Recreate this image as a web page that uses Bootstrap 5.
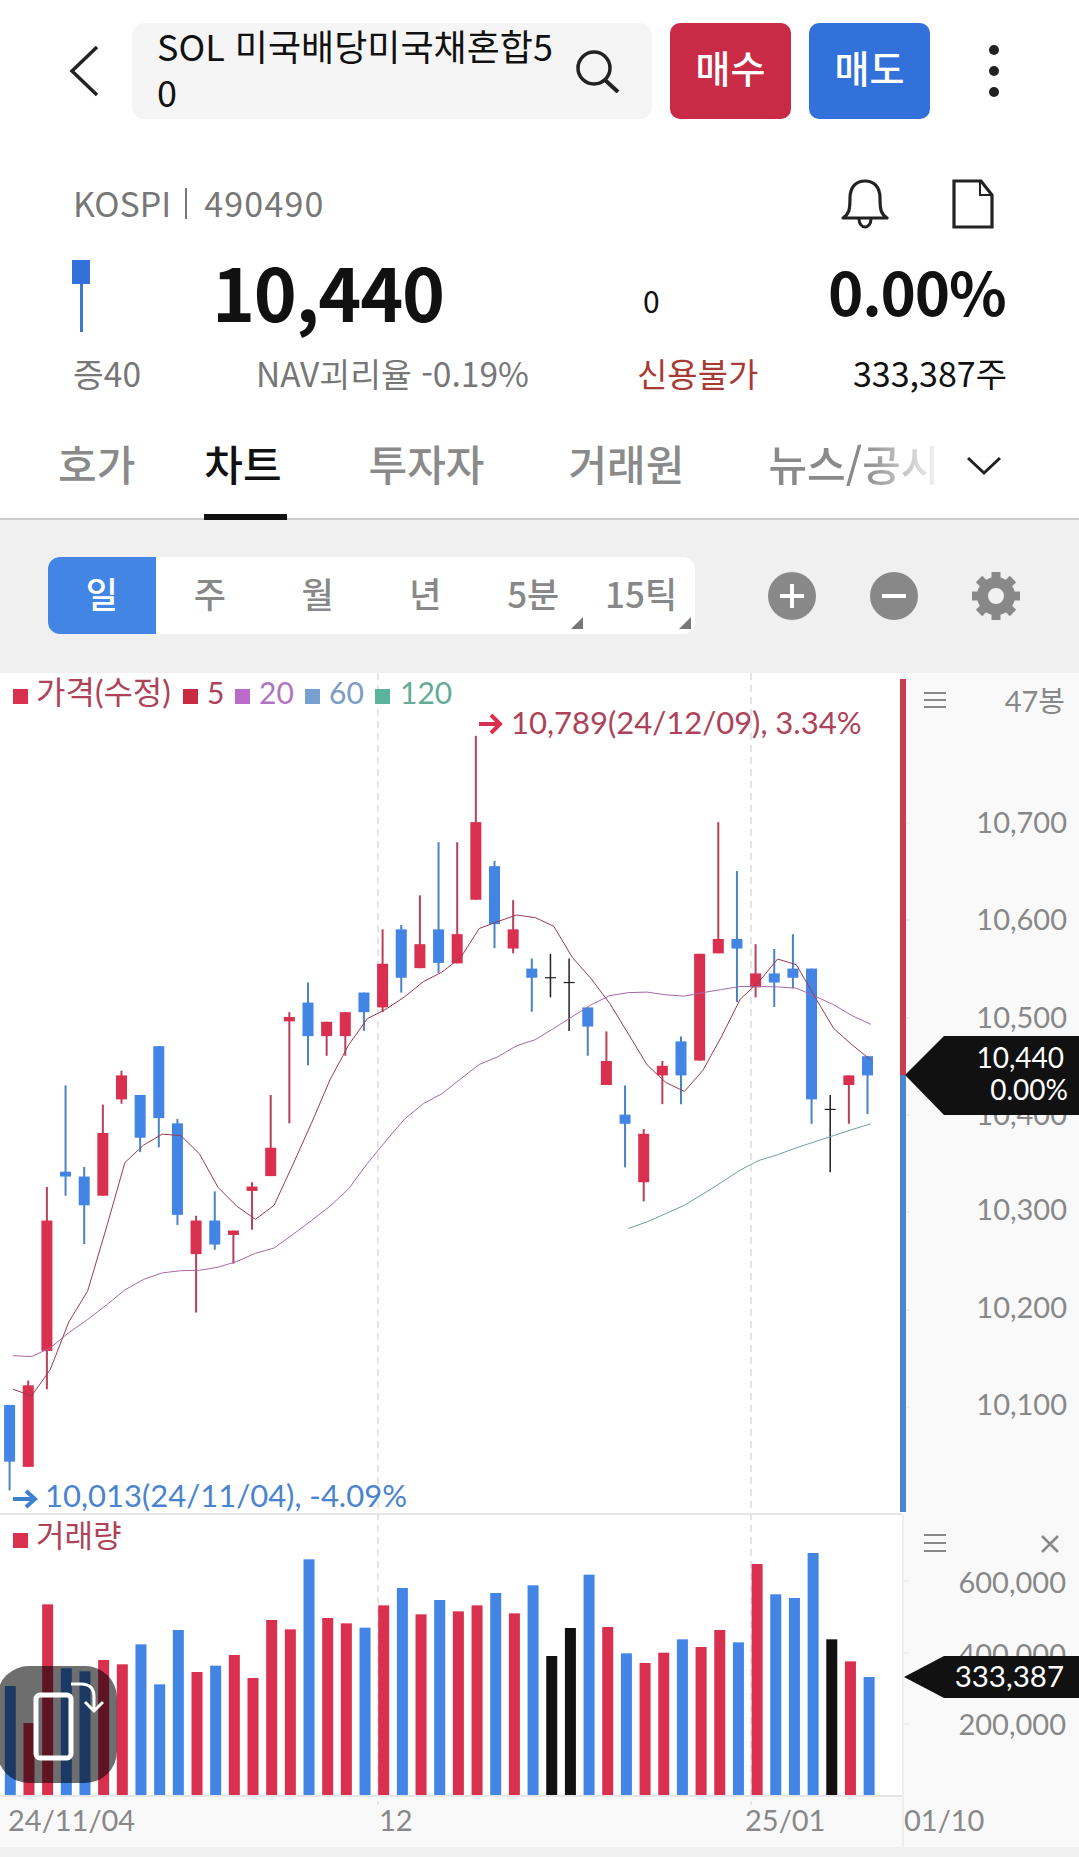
<!DOCTYPE html>
<html lang="ko">
<head>
  <meta charset="UTF-8">
  <meta name="viewport" content="width=device-width, initial-scale=1.0">
  <title>SOL 미국배당미국채혼합50 차트</title>
  <link rel="stylesheet" href="https://cdn.jsdelivr.net/npm/bootstrap@5.3.3/dist/css/bootstrap.min.css">
  <script src="https://cdn.jsdelivr.net/npm/bootstrap@5.3.3/dist/js/bootstrap.bundle.min.js"></script>
  <style>
    html, body { height: 1857px; overflow: hidden; }
    body { width: 1079px; background: #f0f0f0; font-family: "Noto Sans CJK KR", "Noto Sans", sans-serif; color: #111; }
    .top-zone { background: #fff; height: 520px; }

    .head-bar { padding-top: 23px; box-sizing: content-box; height: 96px; }
    .back-slot { width: 132px; padding-left: 69px; }
    .search-box { width: 520px; height: 96px; background: #f5f5f5; border-radius: 12px; padding-left: 25px; }
    .search-name { width: 410px; margin-top: -6px; font-size: 36px; line-height: 46px; word-break: break-all; color: #111; }
    .trade-btn { width: 121px; height: 96px; margin-left: 18px; border: 0; border-radius: 10px; color: #fff; font-size: 38px; font-weight: 500; padding: 0 0 9px; }
    .trade-btn:hover { color: #fff; }
    .trade-buy, .trade-buy:hover { background: #c92a45; }
    .trade-sell, .trade-sell:hover { background: #3371da; }
    .kebab-slot { width: 60px; margin-left: 19px; padding-left: 40px; }
    .kebab-dot { width: 10px; height: 10px; border-radius: 50%; background: #222; margin: 5.5px 0; }

    .code-row { height: 60px; margin-top: 55px; padding-left: 73px; font-size: 34px; color: #777; }
    .code-row > span { margin-top: -4px; }
    .code-row > .code-sep { width: 2px; height: 31px; background: #777; margin: -2px 17px 0 14px; }
    .code-num { letter-spacing: 1.2px; }
    .code-icons { margin-left: auto; padding-right: 85px; gap: 63px; }
    .quote-row { height: 112px; }
    .quote-mark { width: 212px; padding: 26px 0 0 72px; }
    .mini-body { width: 18px; height: 24px; background: #3371da; }
    .mini-wick { width: 3px; height: 48px; background: #3e78c8; margin-left: 8px; }
    .quote-price { width: 431px; font-size: 73px; font-weight: 700; letter-spacing: -1.2px; line-height: 112px; }
    .quote-diff { width: 185px; font-size: 30px; line-height: 112px; padding-top: 10px; }
    .quote-rate { font-size: 60px; font-weight: 700; letter-spacing: -1.2px; line-height: 112px; }
    .sub-row { height: 58px; font-size: 33.5px; line-height: 58px; margin-top: -2px; }
    .sub-a { width: 256px; padding-left: 73px; color: #777; }
    .sub-b { width: 381px; color: #777; }
    .sub-c { width: 216px; color: #a83a35; font-size: 33px; }
    .sub-d { color: #111; font-size: 34px; }

    .tab-bar { height: 110px; margin-top: 8px; border-bottom: 2px solid #ccc; position: relative; padding-left: 58px; }
    .tab-item { position: relative; height: 108px; padding-top: 23px; margin-right: 84px; font-size: 42px; line-height: 60px; color: #8a8a8a; font-weight: 500; white-space: nowrap; }
    .tab-item.on { color: #111; margin-right: 87px; }
    .tab-item.on::after { content: ""; position: absolute; left: 0; right: -5px; bottom: -2px; height: 6px; background: #111; }
    .tab-first { margin-right: 69px; }
    .tab-fade { margin-right: 0; width: 172px; overflow: hidden; -webkit-mask-image: linear-gradient(90deg, #000 55%, rgba(0,0,0,.1) 98%); mask-image: linear-gradient(90deg, #000 55%, rgba(0,0,0,.1) 98%); }
    .tab-more { position: absolute; left: 966px; top: 46px; }

    .tool-bar { height: 153px; padding: 37px 0 0 48px; }
    .period-box { width: 647px; height: 77px; background: #fff; border-radius: 12px; overflow: hidden; }
    .period-item { width: 108px; height: 77px; text-align: center; font-size: 35px; line-height: 70px; color: #888; font-weight: 500; position: relative; padding: 0 0 6px; border: 0; background: none; }
    .period-item.on { background: #4285e5; color: #fff; }
    .period-item.more::after { content: ""; position: absolute; right: 4px; bottom: 5px; border-style: solid; border-width: 0 0 12px 12px; border-color: transparent transparent #777 transparent; }
    .tool-icons { height: 77px; margin-left: 73px; gap: 54px; }

    .chart-zone { height: 1174px; }
    .chart-zone svg { display: block; }
    .chart-zone text { font-family: Lato, "Noto Sans CJK KR", sans-serif; font-size: 29px; fill: #888; }
    .chart-zone text.tag { fill: #fff; font-size: 28px; }
    .chart-zone text.tag-wide { font-size: 29.5px; }
    .chart-zone text.legend-main { font-size: 32px; fill: #ad4259; }
    .chart-zone text.legend-num { font-size: 30px; }
    .chart-zone text.reddish { font-size: 31px; fill: #ad4259; }
    .chart-zone text.blueish { font-size: 31px; fill: #4a84cf; }
  </style>
</head>
<body>

  <div class="top-zone">
    <!-- search / order buttons -->
    <header class="head-bar d-flex">
      <div class="back-slot d-flex align-items-center">
        <svg width="30" height="52" viewBox="0 0 30 52"><path d="M28 2 3 26l25 24" fill="none" stroke="#222" stroke-width="3.5"/></svg>
      </div>
      <div class="search-box d-flex align-items-center">
        <div class="search-name">SOL 미국배당미국채혼합50</div>
        <svg class="ms-2" width="46" height="44" viewBox="0 0 46 44"><circle cx="19" cy="19" r="16" fill="none" stroke="#222" stroke-width="3.5"/><path d="m30 31 13 12" stroke="#222" stroke-width="4"/></svg>
      </div>
      <button type="button" class="btn trade-btn trade-buy">매수</button>
      <button type="button" class="btn trade-btn trade-sell">매도</button>
      <div class="kebab-slot d-flex flex-column justify-content-center">
        <div class="kebab-dot"></div><div class="kebab-dot"></div><div class="kebab-dot"></div>
      </div>
    </header>

    <!-- quote -->
    <div class="code-row d-flex align-items-center">
      <span>KOSPI</span><span class="code-sep"></span><span class="code-num">490490</span>
      <div class="code-icons d-flex">
        <svg width="48" height="50" viewBox="0 0 48 50"><path d="M2 39c6-4 7-8 7-20C9 8 15 2 24 2s15 6 15 17c0 12 1 16 7 20z" fill="none" stroke="#222" stroke-width="3.2" stroke-linejoin="round"/><path d="M18 40c0 5 3 8 6 8s6-3 6-8" fill="none" stroke="#222" stroke-width="3"/></svg>
        <svg width="42" height="50" viewBox="0 0 42 50"><path d="M2 2h27l11 14v32H2z" fill="none" stroke="#222" stroke-width="3.2"/><path d="M28 2v14h12" fill="none" stroke="#222" stroke-width="2"/></svg>
      </div>
    </div>
    <div class="quote-row d-flex">
      <div class="quote-mark"><div class="mini-body"></div><div class="mini-wick"></div></div>
      <div class="quote-price">10,440</div>
      <div class="quote-diff">0</div>
      <div class="quote-rate">0.00%</div>
    </div>
    <div class="sub-row d-flex">
      <div class="sub-a">증40</div>
      <div class="sub-b">NAV괴리율 -0.19%</div>
      <div class="sub-c">신용불가</div>
      <div class="sub-d">333,387주</div>
    </div>

    <!-- tabs -->
    <nav class="tab-bar d-flex">
      <div class="tab-item tab-first">호가</div>
      <div class="tab-item on">차트</div>
      <div class="tab-item">투자자</div>
      <div class="tab-item">거래원</div>
      <div class="tab-item tab-fade">뉴스/공시</div>
      <svg class="tab-more" width="36" height="20" viewBox="0 0 36 20"><path d="m2 2 16 15L34 2" fill="none" stroke="#222" stroke-width="3"/></svg>
    </nav>
  </div>

  <!-- period selector -->
  <div class="tool-bar d-flex">
    <div class="period-box d-flex">
      <button type="button" class="period-item on">일</button>
      <button type="button" class="period-item">주</button>
      <button type="button" class="period-item">월</button>
      <button type="button" class="period-item">년</button>
      <button type="button" class="period-item more">5분</button>
      <button type="button" class="period-item more">15틱</button>
    </div>
    <div class="tool-icons d-flex align-items-center">
      <svg width="48" height="48" viewBox="0 0 48 48"><circle cx="24" cy="24" r="24" fill="#888"/><path d="M24 12v24M12 24h24" stroke="#fff" stroke-width="4"/></svg>
      <svg width="48" height="48" viewBox="0 0 48 48"><circle cx="24" cy="24" r="24" fill="#888"/><path d="M12 24h24" stroke="#fff" stroke-width="4"/></svg>
      <svg width="48" height="48" viewBox="0 0 48 48" id="gearIcon"><circle cx="24" cy="24" r="13.5" fill="none" stroke="#888" stroke-width="11"/></svg>
    </div>
  </div>

  <!-- chart -->
  <div class="chart-zone">
    <svg id="chart" width="1079" height="1174" viewBox="0 673 1079 1174" xmlns="http://www.w3.org/2000/svg">
      <rect x="0" y="673" width="1079" height="1174" fill="#fff"/>
      <rect x="903" y="673" width="176" height="1174" fill="#f9f9f9"/>
      <rect x="0" y="1797" width="1079" height="50" fill="#f9f9f9"/>
      <rect x="0" y="1513" width="903" height="2" fill="#e6e6e6"/>
      <rect x="0" y="1795" width="903" height="2" fill="#e6e6e6"/>
      <rect x="902" y="1515" width="2" height="332" fill="#eee"/>
      <path d="M378 673V1805M751 673V1805" stroke="#e4e4e4" stroke-width="2" stroke-dasharray="7 5"/>

      <g id="candles"></g>
      <g id="volumes"></g>

      <rect x="900" y="679" width="6" height="396" fill="#cb3c54"/>
      <rect x="900" y="1075" width="6" height="437" fill="#4a86d0"/>

      <!-- legend -->
      <rect x="13" y="689" width="15" height="15" fill="#d9304f"/>
      <text class="legend-main" x="36" y="704">가격(수정)</text>
      <rect x="183" y="689" width="15" height="15" fill="#c92a42"/>
      <text class="legend-num" x="207" y="704" style="fill:#ad4259">5</text>
      <rect x="235" y="689" width="15" height="15" fill="#bb6bc9"/>
      <text class="legend-num" x="259" y="704" style="fill:#b073c0">20</text>
      <rect x="305" y="689" width="15" height="15" fill="#779fcf"/>
      <text class="legend-num" x="329" y="704" style="fill:#7a9cc6">60</text>
      <rect x="375" y="689" width="15" height="15" fill="#5cb39c"/>
      <text class="legend-num" x="400" y="704" style="fill:#66ab98">120</text>

      <path d="M479 724h20m-8-9 9 9-9 9" fill="none" stroke="#d9304f" stroke-width="4"/>
      <text class="reddish" x="511" y="734">10,789(24/12/09), 3.34%</text>
      <path d="M13 1499h21m-8-8 9 8-9 8" fill="none" stroke="#3f7fd0" stroke-width="4"/>
      <text class="blueish" x="45" y="1507">10,013(24/11/04), -4.09%</text>

      <rect x="13" y="1533" width="15" height="15" fill="#d9304f"/>
      <text class="reddish" x="36" y="1547">거래량</text>

      <!-- price axis -->
      <path d="M924 693h22M924 700h22M924 707h22M924 1535h22M924 1543h22M924 1551h22" stroke="#888" stroke-width="2"/>
      <text x="1065" y="712" text-anchor="end">47봉</text>
      <text x="1067" y="833" text-anchor="end">10,700</text>
      <text x="1067" y="930" text-anchor="end">10,600</text>
      <text x="1067" y="1028" text-anchor="end">10,500</text>
      <text x="1067" y="1125" text-anchor="end">10,400</text>
      <text x="1067" y="1220" text-anchor="end">10,300</text>
      <text x="1067" y="1318" text-anchor="end">10,200</text>
      <text x="1067" y="1415" text-anchor="end">10,100</text>
      <path d="M906 823h4M906 920h4M906 1018h4M906 1115h4M906 1212h4M906 1310h4M906 1407h4M904 1581h5M904 1653h5M904 1724h5" stroke="#eee" stroke-width="2"/>
      <polygon points="905,1075 944,1036 1079,1036 1079,1115 944,1115" fill="#111"/>
      <text class="tag" x="1064" y="1068" text-anchor="end">10,440</text>
      <text class="tag" x="1068" y="1100" text-anchor="end">0.00%</text>

      <!-- volume axis -->
      <path d="M1042 1536l16 16M1058 1536l-16 16" stroke="#888" stroke-width="2.5"/>
      <text x="1066" y="1593" text-anchor="end">600,000</text>
      <text x="1066" y="1665" text-anchor="end">400,000</text>
      <text x="1066" y="1735" text-anchor="end">200,000</text>
      <polygon points="904,1677 944,1656 1079,1656 1079,1698 944,1698" fill="#111"/>
      <text class="tag tag-wide" x="1064" y="1687" text-anchor="end">333,387</text>

      <!-- date axis -->
      <text x="8" y="1831">24/11/04</text>
      <text x="379" y="1831">12</text>
      <text x="745" y="1831">25/01</text>
      <text x="904" y="1831">01/10</text>

      <!-- rotate button -->
      <rect x="-3" y="1666" width="120" height="117" rx="32" fill="rgba(0,0,0,.57)"/>
      <rect x="36" y="1695" width="35" height="63" rx="4" fill="none" stroke="#fff" stroke-width="5"/>
      <path d="M71 1684h10q13 0 13 13v13m-9-8 9 9 9-9" fill="none" stroke="#fff" stroke-width="3"/>
    </svg>
  </div>

  <script>
    document.addEventListener('DOMContentLoaded', () => {
      const RED = '#d9304f', BLUE = '#4285e5', BLACK = '#111';
      const WICK = { r: '#b8405a', b: '#4a82c4', k: '#222' };
      const BODY = { r: RED, b: BLUE, k: BLACK };
      const NS = 'http://www.w3.org/2000/svg';

      // price rows were read off at this scale
      const py = v => 840 + v / 2.294;
      const candleX = i => 9.6 + 18.65 * i;
      const lineX = i => 13 + 18.65 * i;
      const volX = i => 10.3 + 18.67 * i;

      function add(parent, tag, attrs) {
        const el = document.createElementNS(NS, tag);
        Object.keys(attrs).forEach(k => el.setAttribute(k, attrs[k]));
        parent.appendChild(el);
      }

      // color, wick top, wick bottom, body top, body bottom
      const candles = [
        ['b',1296,1492,1296,1426],['r',1240,1438,1251,1438],['r',796,1260,873,1172],['b',563,816,761,772],
        ['b',750,927,772,838],['r',607,816,672,816],['r',529,605,540,595],['b',585,716,585,683],
        ['b',473,705,473,638],['b',640,883,650,860],['r',862,1084,873,950],['b',806,940,873,928],
        ['r',896,972,896,906],['r',785,894,795,805],['r',585,771,706,771],['r',395,650,406,416],
        ['b',327,517,373,450],['r',417,495,417,450],['r',395,495,395,450],['b',350,438,350,395],
        ['r',205,395,284,384],['b',195,350,205,316],['r',127,294,239,294],['b',5,305,205,282],
        ['r',5,283,216,283],['r',-239,137,-41,137],['b',48,248,60,193],['r',138,260,205,249],
        ['b',272,394,295,316],['k',261,361,316,316],['k',272,438,327,327],['b',384,495,384,428],
        ['r',439,562,507,562],['b',563,751,630,651],['r',663,829,674,785],['r',507,606,518,540],
        ['b',451,606,462,540],['r',261,506,261,506],['r',-41,260,227,260],['b',71,372,227,249],
        ['r',239,361,306,338],['b',250,383,306,327],['b',216,340,295,316],['b',295,651,295,595],
        ['k',585,762,618,618],['r',540,651,540,562],['b',496,629,496,540]
      ];

      const ma5 = [1260,1275,1215,1105,1035,890,740,700,675,678,720,797,840,870,838,745,650,550,470,410,388,360,325,303,270,203,187,172,178,198,270,318,375,445,516,556,577,528,450,365,325,273,286,360,432,470,505];
      const ma20 = [1183,1185,1165,1130,1100,1067,1032,1008,993,988,987,980,967,948,936,905,873,840,800,742,690,640,605,582,548,515,497,472,458,432,405,378,357,350,349,355,358,350,343,336,336,337,340,358,378,403,423];
      const ma60 = [891,876,857,838,812,785,757,735,722,706,692,678,664,651]; // starts at bar 33

      // color, top y as read from the volume crop
      const volumes = [
        ['b',558],['r',669],['r',313],['b',505],['b',514],['r',480],['r',493],['b',433],['b',553],['b',390],
        ['r',516],['b',497],['r',465],['r',534],['r',360],['r',388],['b',178],['r',354],['r',370],['b',383],
        ['r',316],['b',264],['r',343],['b',300],['r',334],['r',316],['b',279],['r',340],['b',256],['k',468],
        ['k',384],['b',224],['r',381],['b',460],['r',489],['r',458],['b',418],['r',441],['r',390],['b',427],
        ['r',192],['b',283],['b',294],['b',159],['k',418],['r',484],['b',531]
      ];

      const candleBox = document.getElementById('candles');
      const volumeBox = document.getElementById('volumes');

      candles.forEach((c, i) => {
        const x = candleX(i);
        const isDoji = c[3] === c[4];
        add(candleBox, 'line', { x1: x, x2: x, y1: py(c[1]), y2: py(c[2]), stroke: WICK[c[0]], 'stroke-width': c[0] === 'k' ? 1.5 : 2 });
        if (isDoji) {
          add(candleBox, 'line', { x1: x - 5.5, x2: x + 5.5, y1: py(c[3]), y2: py(c[3]), stroke: WICK[c[0]], 'stroke-width': 1.2 });
        } else {
          add(candleBox, 'rect', { x: x - 5.5, y: py(c[3]), width: 11, height: py(c[4]) - py(c[3]), fill: BODY[c[0]] });
        }
      });

      function maLine(values, start, color) {
        const pts = values.map((v, i) => lineX(i + start).toFixed(1) + ',' + py(v).toFixed(1)).join(' ');
        add(candleBox, 'polyline', { points: pts, fill: 'none', stroke: color, 'stroke-width': 1 });
      }
      maLine(ma20, 0, '#a868a8');
      maLine(ma5, 0, '#9c3a50');
      maLine(ma60, 33, '#6f9fa0');

      volumes.forEach((v, i) => {
        const top = 1500 + v[1] / 3;
        add(volumeBox, 'rect', { x: volX(i) - 5.5, y: top, width: 11, height: 1795 - top, fill: BODY[v[0]] });
      });

      // gear teeth
      const gear = document.getElementById('gearIcon');
      for (let a = 0; a < 360; a += 45) {
        add(gear, 'rect', { x: 19.5, y: 0, width: 9, height: 9, fill: '#888', transform: 'rotate(' + a + ' 24 24)' });
      }
    });
  </script>
</body>
</html>
